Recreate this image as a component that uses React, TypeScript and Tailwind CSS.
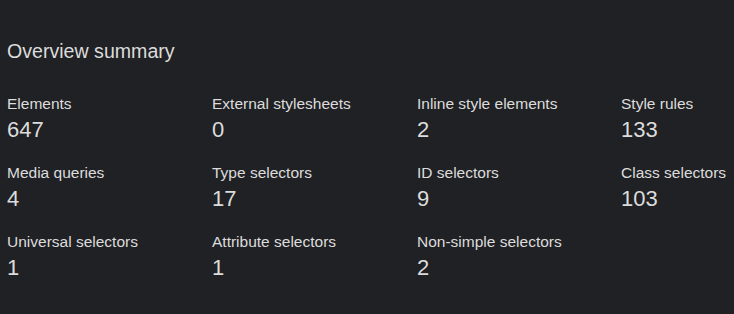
import React from "react";

const items: [string, string][] = [
  ["Elements", "647"],
  ["External stylesheets", "0"],
  ["Inline style elements", "2"],
  ["Style rules", "133"],
  ["Media queries", "4"],
  ["Type selectors", "17"],
  ["ID selectors", "9"],
  ["Class selectors", "103"],
  ["Universal selectors", "1"],
  ["Attribute selectors", "1"],
  ["Non-simple selectors", "2"],
];

export default function App() {
  return (
    <div
      className="w-[734px] h-[314px] bg-[#202124] text-[#dcdcdc] overflow-hidden pl-[7px] pt-[39px]"
      style={{ fontFamily: '"Liberation Sans", Arial, sans-serif' }}
    >
      <h2 className="text-[19.6px] leading-[24px] font-normal">Overview summary</h2>
      <div className="grid grid-cols-[205px_205px_204px_120px] gap-y-[20px] mt-[31px]">
        {items.map(([label, value]) => (
          <div key={label} className="flex flex-col whitespace-nowrap">
            <div className="text-[15.5px] leading-[20px]">{label}</div>
            <div className="text-[22px] leading-[26px] mt-[3px]">{value}</div>
          </div>
        ))}
      </div>
    </div>
  );
}
